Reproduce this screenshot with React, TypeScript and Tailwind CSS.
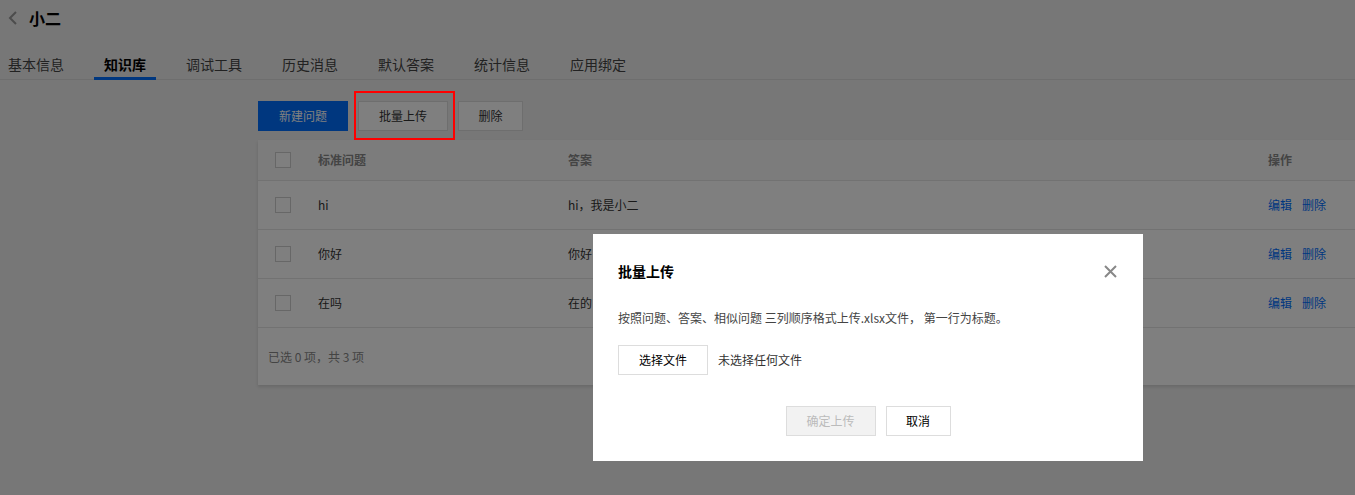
const tabs = ["基本信息", "知识库", "调试工具", "历史消息", "默认答案", "统计信息", "应用绑定"];

const rows = [
  { q: "hi", a: "hi，我是小二" },
  { q: "你好", a: "你好，有什么可以帮您" },
  { q: "在吗", a: "在的，请问有什么问题" },
];

function Checkbox() {
  return <span className="block w-4 h-4 border border-[#cfcfcf] bg-white" />;
}

export default function App() {
  return (
    <div className="relative w-full h-[495px] overflow-hidden bg-[#eeeeee] text-xs text-[#333] font-['Noto_Sans_CJK_SC','Noto_Sans',sans-serif]">
      {/* header */}
      <div className="h-9 flex items-center pl-2 gap-[11px]">
        <svg width="10" height="16" viewBox="0 0 10 16" fill="none">
          <path d="M8 2 L2 8 L8 14" stroke="#999" strokeWidth="2" />
        </svg>
        <span className="text-base font-bold text-black">小二</span>
      </div>

      {/* tabs */}
      <div className="mt-[14px] flex gap-5 border-b border-[#dcdcdc] pl-0">
        {tabs.map((t, i) => (
          <div
            key={t}
            className={
              i === 1
                ? "h-[30px] px-2.5 -mb-px flex items-center text-sm font-bold text-black border-b-[3px] border-[#006eff] first:-ml-0.5"
                : "h-[30px] px-2.5 -mb-px flex items-center text-sm text-[#444] border-b-[3px] border-transparent first:-ml-0.5"
            }
          >
            {t}
          </div>
        ))}
      </div>

      {/* content */}
      <div className="pl-[258px] pt-[21px]">
        <div className="flex gap-2.5">
          <button className="w-[90px] h-[30px] bg-[#006eff] text-white">新建问题</button>
          <button className="w-[90px] h-[30px] bg-white border border-[#dddddd] text-[#333]">批量上传</button>
          <button className="w-[65px] h-[30px] bg-white border border-[#dddddd] text-[#333]">删除</button>
        </div>

        <div className="mt-[9px] bg-white shadow-[0_2px_3px_rgba(0,0,0,0.12)]">
          <div className="grid grid-cols-[60px_250px_1fr_87px] h-[41px] items-center bg-[#f9f9f9] border-b border-[#e5e5e5] font-bold text-[#888]">
            <div className="pl-[17px]"><Checkbox /></div>
            <div>标准问题</div>
            <div>答案</div>
            <div>操作</div>
          </div>
          {rows.map((r) => (
            <div key={r.q} className="grid grid-cols-[60px_250px_1fr_87px] h-[49px] items-center border-b border-[#e5e5e5]">
              <div className="pl-[17px]"><Checkbox /></div>
              <div>{r.q}</div>
              <div>{r.a}</div>
              <div className="flex gap-2.5 text-[#006eff]">
                <span>编辑</span>
                <span>删除</span>
              </div>
            </div>
          ))}
          <div className="h-[57px] flex items-center pl-2.5 text-[#888]">已选 0 项，共 3 项</div>
        </div>
      </div>

      {/* mask */}
      <div className="absolute inset-0 bg-black/50" />

      {/* annotation */}
      <div className="absolute left-[354px] top-[91px] w-[101px] h-[49px] border-2 border-[#ff0000]" />

      {/* dialog */}
      <div className="absolute left-[593px] top-[234px] w-[550px] bg-white px-[25px] pt-[27px] pb-[25px]">
        <div className="h-5 flex items-center justify-between">
          <span className="text-sm font-bold text-black">批量上传</span>
          <svg width="13" height="13" viewBox="0 0 13 13" className="mr-[1px]">
            <path d="M1 1 L12 12 M12 1 L1 12" stroke="#888" strokeWidth="2" />
          </svg>
        </div>
        <div className="mt-[27px] h-5 flex items-center text-[#444]">
          按照问题、答案、相似问题 三列顺序格式上传.xlsx文件， 第一行为标题。
        </div>
        <div className="mt-[17px] flex items-center gap-2.5">
          <button className="w-[90px] h-[30px] bg-white border border-[#dddddd] text-black">选择文件</button>
          <span className="text-[#333]">未选择任何文件</span>
        </div>
        <div className="mt-[31px] flex justify-center gap-2.5">
          <button className="w-[90px] h-[30px] bg-[#f2f2f2] border border-[#dddddd] text-[#bbbbbb]">确定上传</button>
          <button className="w-[65px] h-[30px] bg-white border border-[#dddddd] text-black">取消</button>
        </div>
      </div>
    </div>
  );
}
